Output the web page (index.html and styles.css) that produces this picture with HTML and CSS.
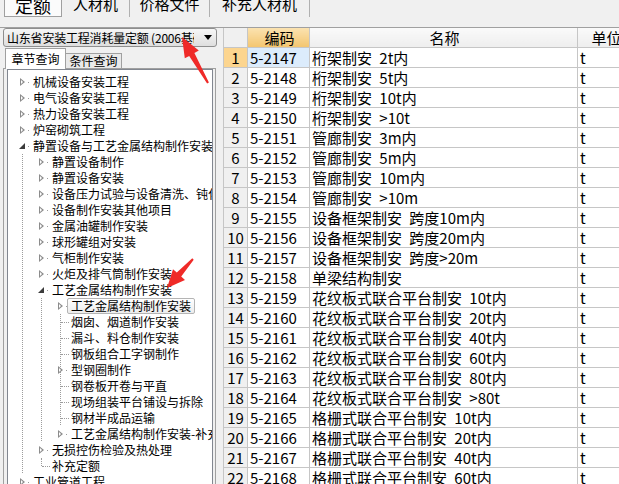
FILE: index.html
```html
<!DOCTYPE html>
<html lang="zh-CN">
<head>
  <meta charset="UTF-8">
  <title>定额</title>
  <link rel="stylesheet" href="styles.css">
</head>
<body>
<div class="app">
  <div class="tabs">
    <div class="tab on">定额</div>
    <div class="tab t2">人材机</div>
    <div class="tab t3">价格文件</div>
    <div class="tab t4">补充人材机</div>
  </div>

  <div class="main">
    <div class="side">
      <div class="combo">
        <span class="combo-text">山东省安装工程消耗量定额 (2006基础价目表)</span>
        <span class="combo-arrow"></span>
      </div>
      <div class="subtabs">
        <div class="subtab on">章节查询</div>
        <div class="subtab off">条件查询</div>
      </div>
      <div class="page">
        <div class="tree">
          <div class="node"><i class="x c"></i><span>机械设备安装工程</span></div>
          <div class="node"><i class="x c"></i><span>电气设备安装工程</span></div>
          <div class="node"><i class="x c"></i><span>热力设备安装工程</span></div>
          <div class="node"><i class="x c"></i><span>炉窑砌筑工程</span></div>
          <div class="node"><i class="x o"></i><span>静置设备与工艺金属结构制作安装</span></div>
          <div class="node"><i class="g ln"></i><i class="x c"></i><span>静置设备制作</span></div>
          <div class="node"><i class="g ln"></i><i class="x c"></i><span>静置设备安装</span></div>
          <div class="node"><i class="g ln"></i><i class="x c"></i><span>设备压力试验与设备清洗、钝化</span></div>
          <div class="node"><i class="g ln"></i><i class="x c"></i><span>设备制作安装其他项目</span></div>
          <div class="node"><i class="g ln"></i><i class="x c"></i><span>金属油罐制作安装</span></div>
          <div class="node"><i class="g ln"></i><i class="x c"></i><span>球形罐组对安装</span></div>
          <div class="node"><i class="g ln"></i><i class="x c"></i><span>气柜制作安装</span></div>
          <div class="node"><i class="g ln"></i><i class="x c"></i><span>火炬及排气筒制作安装</span></div>
          <div class="node"><i class="g ln"></i><i class="x o"></i><span>工艺金属结构制作安装</span></div>
          <div class="node"><i class="g ln"></i><i class="g ln"></i><i class="x c"></i><span class="sel">工艺金属结构制作安装</span></div>
          <div class="node"><i class="g ln"></i><i class="g ln"></i><i class="x t"></i><span>烟囱、烟道制作安装</span></div>
          <div class="node"><i class="g ln"></i><i class="g ln"></i><i class="x t"></i><span>漏斗、料仓制作安装</span></div>
          <div class="node"><i class="g ln"></i><i class="g ln"></i><i class="x t"></i><span>钢板组合工字钢制作</span></div>
          <div class="node"><i class="g ln"></i><i class="g ln"></i><i class="x c v"></i><span>型钢圈制作</span></div>
          <div class="node"><i class="g ln"></i><i class="g ln"></i><i class="x t"></i><span>钢卷板开卷与平直</span></div>
          <div class="node"><i class="g ln"></i><i class="g ln"></i><i class="x t"></i><span>现场组装平台铺设与拆除</span></div>
          <div class="node"><i class="g ln"></i><i class="g ln"></i><i class="x t"></i><span>钢材半成品运输</span></div>
          <div class="node"><i class="g ln"></i><i class="g ln"></i><i class="x c"></i><span>工艺金属结构制作安装-补充</span></div>
          <div class="node"><i class="g ln"></i><i class="x c"></i><span>无损控伤检验及热处理</span></div>
          <div class="node"><i class="g ln"></i><i class="x l"></i><span>补充定额</span></div>
          <div class="node"><i class="x c"></i><span>工业管道工程</span></div>
        </div>
      </div>
    </div>

    <div class="grid">
      <table class="sheet">
        <colgroup>
          <col class="c-n"><col class="c-code"><col class="c-name"><col class="c-unit">
        </colgroup>
        <thead>
          <tr><th class="n"></th><th class="hl">编码</th><th>名称</th><th>单位</th></tr>
        </thead>
        <tbody>
          <tr class="cur"><td class="n">1</td><td class="code">5-2147</td><td>桁架制安 2t内</td><td>t</td></tr>
          <tr><td class="n">2</td><td>5-2148</td><td>桁架制安 5t内</td><td>t</td></tr>
          <tr><td class="n">3</td><td>5-2149</td><td>桁架制安 10t内</td><td>t</td></tr>
          <tr><td class="n">4</td><td>5-2150</td><td>桁架制安 &gt;10t</td><td>t</td></tr>
          <tr><td class="n">5</td><td>5-2151</td><td>管廊制安 3m内</td><td>t</td></tr>
          <tr><td class="n">6</td><td>5-2152</td><td>管廊制安 5m内</td><td>t</td></tr>
          <tr><td class="n">7</td><td>5-2153</td><td>管廊制安 10m内</td><td>t</td></tr>
          <tr><td class="n">8</td><td>5-2154</td><td>管廊制安 &gt;10m</td><td>t</td></tr>
          <tr><td class="n">9</td><td>5-2155</td><td>设备框架制安 跨度10m内</td><td>t</td></tr>
          <tr><td class="n">10</td><td>5-2156</td><td>设备框架制安 跨度20m内</td><td>t</td></tr>
          <tr><td class="n">11</td><td>5-2157</td><td>设备框架制安 跨度&gt;20m</td><td>t</td></tr>
          <tr><td class="n">12</td><td>5-2158</td><td>单梁结构制安</td><td>t</td></tr>
          <tr><td class="n">13</td><td>5-2159</td><td>花纹板式联合平台制安 10t内</td><td>t</td></tr>
          <tr><td class="n">14</td><td>5-2160</td><td>花纹板式联合平台制安 20t内</td><td>t</td></tr>
          <tr><td class="n">15</td><td>5-2161</td><td>花纹板式联合平台制安 40t内</td><td>t</td></tr>
          <tr><td class="n">16</td><td>5-2162</td><td>花纹板式联合平台制安 60t内</td><td>t</td></tr>
          <tr><td class="n">17</td><td>5-2163</td><td>花纹板式联合平台制安 80t内</td><td>t</td></tr>
          <tr><td class="n">18</td><td>5-2164</td><td>花纹板式联合平台制安 &gt;80t</td><td>t</td></tr>
          <tr><td class="n">19</td><td>5-2165</td><td>格栅式联合平台制安 10t内</td><td>t</td></tr>
          <tr><td class="n">20</td><td>5-2166</td><td>格栅式联合平台制安 20t内</td><td>t</td></tr>
          <tr><td class="n">21</td><td>5-2167</td><td>格栅式联合平台制安 40t内</td><td>t</td></tr>
          <tr><td class="n">22</td><td>5-2168</td><td>格栅式联合平台制安 60t内</td><td>t</td></tr>
        </tbody>
      </table>
    </div>
  </div>

  <svg class="marks" width="619" height="484" viewBox="0 0 619 484">
    <polygon fill="#ef2a28" points="182,37 198.8,50.5 194.4,53 208.9,82.5 207.1,83.5 189.2,55.9 184.8,58.3"/>
    <polygon fill="#ef2a28" points="167,288 185,279.9 181.2,276.6 193.7,259.7 192.3,258.3 176.8,272.6 173,269.3"/>
  </svg>
</div>
</body>
</html>
```

FILE: styles.css
```css
body {
  margin: 0;
  background: #f0f0f0;
  font-family: "Noto Sans CJK SC", "DejaVu Sans", sans-serif;
  color: #000;
}
.app {
  position: relative;
  width: 619px;
  height: 484px;
  overflow: hidden;
}

/* top tabs */
.tabs {
  display: flex;
  align-items: flex-start;
  height: 27px;
  padding-left: 4px;
  border-bottom: 1px solid #a0a0a0;
  overflow: hidden;
}
.tab {
  box-sizing: border-box;
  height: 22px;
  margin-top: -5px;
  line-height: 18px;
  font-size: 15px;
  text-align: center;
  border-right: 1px solid #b0b0b0;
}
.tab.on {
  width: 58px;
  border: 1px solid #a0a0a0;
  background: #fbfbfb;
  font-size: 18px;
}
.t2 { width: 68px; }
.t3 { width: 80px; }
.t4 { width: 100px; }

.main {
  display: flex;
  height: 456px;
}

/* left side */
.side {
  flex: none;
  width: 217px;
}
.combo {
  display: flex;
  align-items: center;
  box-sizing: border-box;
  width: 214px;
  height: 19px;
  margin-left: 3px;
  padding-left: 3px;
  border: 1px solid #8e8e8e;
  border-radius: 3px;
  background: linear-gradient(#f7f7f7, #dedede);
  font-size: 12px;
}
.combo-text {
  flex: 1;
  overflow: hidden;
  white-space: nowrap;
  line-height: 17px;
  letter-spacing: -0.2px;
}
.combo-arrow {
  width: 0;
  height: 0;
  margin: 0 4px 0 10px;
  border-left: 4px solid transparent;
  border-right: 4px solid transparent;
  border-top: 5px solid #000;
}
.subtabs {
  display: flex;
  align-items: flex-end;
  height: 21px;
  margin-left: 5px;
}
.subtab {
  box-sizing: border-box;
  border: 1px solid #a0a0a0;
  border-bottom: none;
  font-size: 12px;
  text-align: center;
}
.subtab.on {
  position: relative;
  z-index: 1;
  width: 61px;
  height: 21px;
  margin-bottom: -1px;
  line-height: 19px;
  background: #fff;
}
.subtab.off {
  width: 56px;
  height: 15px;
  line-height: 14px;
  border-left: none;
  background: #e9e9e9;
}
.page {
  box-sizing: border-box;
  width: 213px;
  height: 420px;
  margin-left: 3px;
  padding-left: 3px;
  border: 1px solid #a0a0a0;
  border-bottom: none;
}

/* tree */
.tree {
  box-sizing: border-box;
  width: 206px;
  height: 420px;
  padding-top: 4px;
  border: 1px solid #828790;
  background: #fff;
  overflow: hidden;
}
.node {
  display: flex;
  height: 16px;
  padding-left: 4px;
  line-height: 16px;
  font-size: 12px;
  white-space: nowrap;
}
.node i {
  position: relative;
  flex: none;
  width: 19px;
  height: 16px;
}
.node span {
  margin-left: 2px;
}
.node .sel {
  margin-left: -2px;
  padding: 0 3px;
  line-height: 14px;
  border: 1px solid #b4b4b4;
  border-radius: 2px;
  background: linear-gradient(#ffffff, #ececec);
}
.g.ln,
.x.t {
  background: linear-gradient(#9c9c9c 50%, transparent 50%) 10px 0 / 1px 2px repeat-y;
}
.x.t::after,
.x.l::after {
  content: "";
  position: absolute;
  left: 11px;
  top: 8px;
  width: 8px;
  border-top: 1px dotted #9c9c9c;
}
.x.l::before {
  content: "";
  position: absolute;
  left: 10px;
  top: 0;
  height: 8px;
  border-left: 1px dotted #9c9c9c;
}
.x.c,
.x.o {
  background: linear-gradient(#9c9c9c, #9c9c9c) 16px 8px / 1px 1px no-repeat;
}
.x.c.v {
  background:
    linear-gradient(#9c9c9c, #9c9c9c) 16px 8px / 1px 1px no-repeat,
    linear-gradient(#9c9c9c 50%, transparent 50%) 10px 0 / 1px 2px repeat-y;
}
.x.c::before {
  content: "";
  position: absolute;
  left: 8px;
  top: 4px;
  border-left: 5px solid #8c8c8c;
  border-top: 4px solid transparent;
  border-bottom: 4px solid transparent;
}
.x.c::after {
  content: "";
  position: absolute;
  left: 9px;
  top: 6px;
  border-left: 2px solid #fff;
  border-top: 2px solid transparent;
  border-bottom: 2px solid transparent;
}
.x.o::before {
  content: "";
  position: absolute;
  left: 7px;
  top: 5px;
  border-left: 6px solid transparent;
  border-bottom: 6px solid #3c3c3c;
}

/* grid */
.grid {
  flex: 1;
  margin-left: 6px;
  overflow: hidden;
}
.sheet {
  border-collapse: collapse;
  table-layout: fixed;
  width: 410px;
  font-size: 15px;
  word-spacing: 4px;
}
.c-n { width: 24px; }
.c-code { width: 62px; }
.c-name { width: 268px; }
.c-unit { width: 56px; }
.sheet th,
.sheet td {
  height: 19px;
  padding: 0 0 0 2px;
  border: 1px solid #c6c6c6;
  line-height: 19px;
  white-space: nowrap;
  overflow: hidden;
  text-align: left;
  font-weight: normal;
  background: #fff;
}
.sheet th {
  border-top: none;
  text-align: center;
  background: linear-gradient(#fafafa, #eeeeee);
}
.sheet th.hl {
  background: linear-gradient(#fbe2b0, #f3c670);
}
.sheet .n {
  padding: 0;
  text-align: center;
  background: #f0f0f0;
}
.sheet .cur .n {
  background: #fcd58f;
}
.sheet .cur .code {
  background: #dcecfc;
}

.marks {
  position: absolute;
  left: 0;
  top: 0;
  pointer-events: none;
}
```
